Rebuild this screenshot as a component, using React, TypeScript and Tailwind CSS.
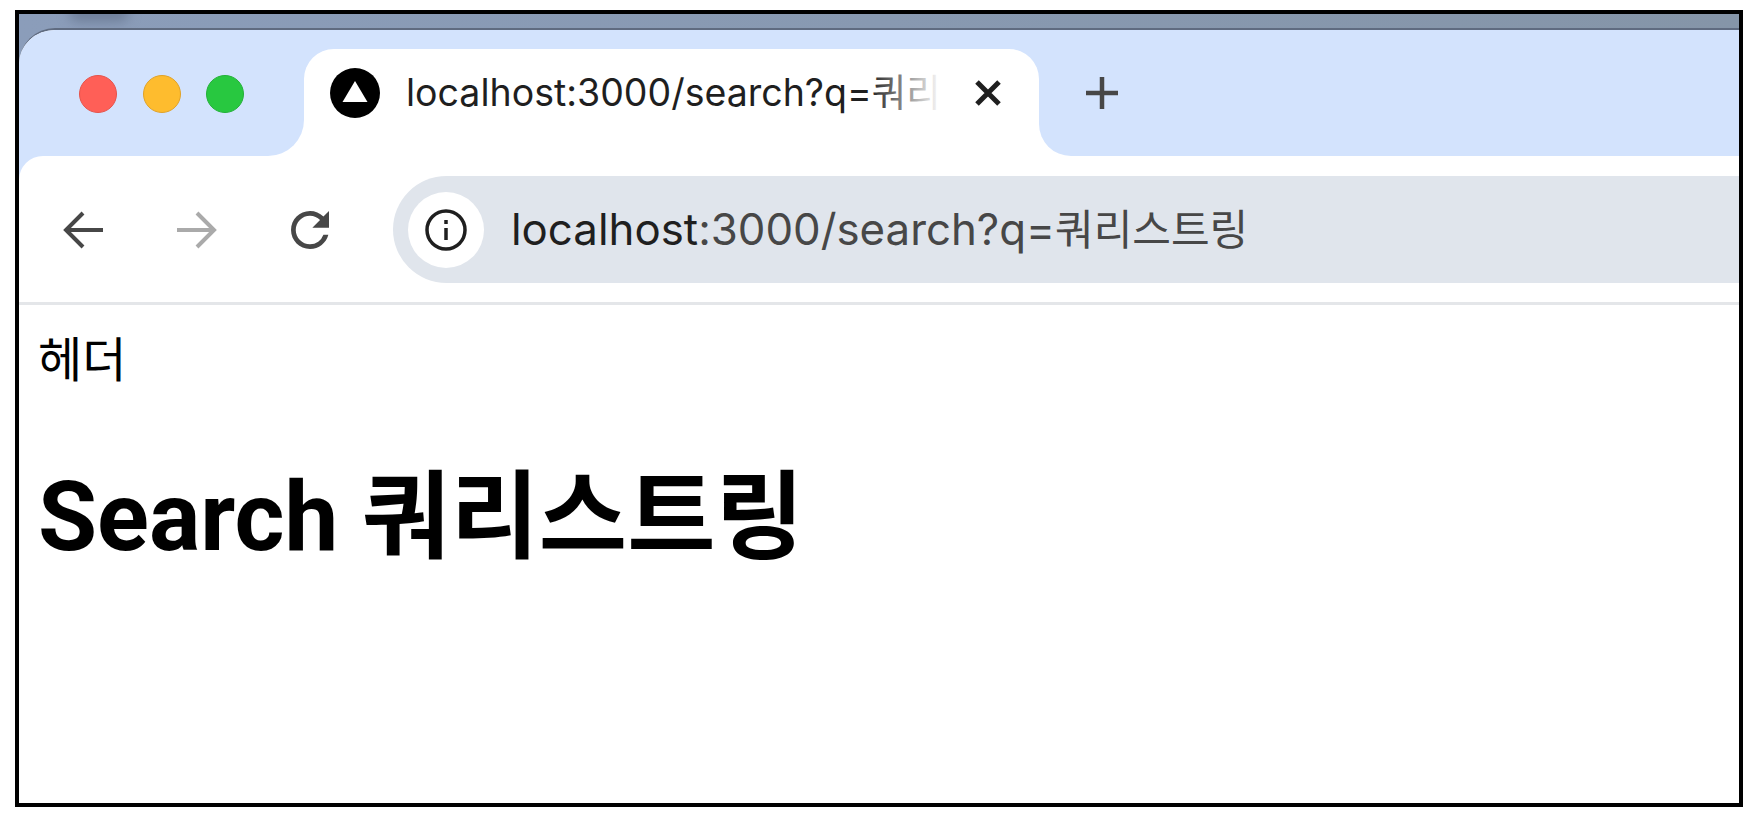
const sans = 'font-["Inter","Noto_Sans_CJK_KR",sans-serif]';

function Dot({ fill, edge }: { fill: string; edge: string }) {
  return <span className={`h-[38px] w-[38px] rounded-full border ${fill} ${edge}`} />;
}

function NavIcon({ children, color }: { children: React.ReactNode; color: string }) {
  return (
    <svg viewBox="0 0 40 40" className={`h-10 w-10 ${color}`} fill="none" stroke="currentColor" strokeWidth="4">
      {children}
    </svg>
  );
}

export default function App() {
  return (
    <div className="h-[820px] w-[1760px] overflow-hidden bg-white pl-[15px] pt-[10px]">
      <div className="flex h-[797px] w-[1728px] flex-col overflow-hidden border-4 border-black bg-white">
        <div className="relative shrink-0 overflow-hidden bg-linear-to-r from-[#8b9dba] to-[#8595a8] pt-[14px]">
          <div className="absolute left-[50px] top-[-10px] h-[18px] w-[60px] rounded-full bg-[#6f7f99] blur-[6px]" />
          <div className="relative flex h-[128px] overflow-hidden rounded-tl-[36px] border-t-2 border-[#5f6b80] bg-white">
            <div className="flex h-[126px] w-[285px] shrink-0 items-start gap-[25.5px] rounded-br-[36px] bg-[#d3e3fd] pl-[60px] pt-[45px]">
              <Dot fill="bg-[#ff5f57]" edge="border-[#e5534b]" />
              <Dot fill="bg-[#febc2e]" edge="border-[#e0a228]" />
              <Dot fill="bg-[#28c840]" edge="border-[#23b138]" />
            </div>
            <div className="h-[126px] w-[735px] shrink-0 bg-[#d3e3fd] pt-[19px]">
              <div className="flex h-[107px] items-start rounded-t-[30px] bg-white pl-[26px] pt-[19px]">
                <svg viewBox="0 0 50 50" className="h-[50px] w-[50px] shrink-0">
                  <circle cx="25" cy="25" r="25" fill="#000" />
                  <path d="M25 13 L37.5 34 H12.5 Z" fill="#fff" />
                </svg>
                <span className={`${sans} relative ml-[26px] mt-[3px] w-[535px] shrink-0 overflow-hidden text-[37.5px] leading-[44px] whitespace-nowrap text-[#1f1f1f]`}>
                  localhost:3000/search?q=쿼리
                  <span className="absolute inset-y-0 right-0 w-[72px] bg-linear-to-r from-white/0 to-white" />
                </span>
                <svg viewBox="0 0 30 30" className="ml-[32px] mt-[10px] h-[30px] w-[30px] shrink-0" stroke="#1f1f1f" strokeWidth="5">
                  <path d="M4 4 L26 26 M26 4 L4 26" />
                </svg>
              </div>
            </div>
            <div className="flex h-[126px] flex-1 items-start rounded-bl-[32px] bg-[#d3e3fd] pl-[46px] pt-[46px]">
              <svg viewBox="0 0 34 34" className="h-[34px] w-[34px]" stroke="#474747" strokeWidth="4.5">
                <path d="M17 1 V33 M1 17 H33" />
              </svg>
            </div>
          </div>
        </div>
        <div className="shrink-0 bg-[#d3e3fd]">
          <div className="flex h-[149px] items-start rounded-tl-[24px] border-b-[3px] border-[#e4e6e9] bg-white pt-[20px]">
            <div className="flex h-[107px] w-[374px] shrink-0 items-center gap-[74px] pl-[44px]">
              <NavIcon color="text-[#474747]">
                <path d="M40 20 H4 M20 3 L3 20 L20 37" />
              </NavIcon>
              <NavIcon color="text-[#aaaaaa]">
                <path d="M0 20 H36 M20 3 L37 20 L20 37" />
              </NavIcon>
              <svg viewBox="4 4 16 16" className="h-[38px] w-[38px]" fill="#474747">
                <path d="M17.65 6.35A7.958 7.958 0 0 0 12 4c-4.42 0-7.99 3.58-7.99 8s3.57 8 7.99 8c3.73 0 6.84-2.55 7.73-6h-2.08A5.99 5.99 0 0 1 12 18c-3.31 0-6-2.69-6-6s2.69-6 6-6c1.66 0 3.14.69 4.22 1.78L13 11h7V4l-2.35 2.35z" />
              </svg>
            </div>
            <div className="flex h-[107px] flex-1 items-center rounded-l-[54px] bg-[#e0e5ec] pl-[15px]">
              <div className="flex h-[76px] w-[76px] shrink-0 items-center justify-center rounded-full bg-white">
                <svg viewBox="0 0 42 42" className="h-[42px] w-[42px]" fill="none" stroke="#1f1f1f" strokeWidth="3.5">
                  <circle cx="21" cy="21" r="19" />
                  <path d="M21 19 V31 M21 11 V15" />
                </svg>
              </div>
              <span className={`${sans} ml-[27px] text-[43.8px] leading-none whitespace-nowrap text-[#474747]`}>
                <span className="text-[#1f1f1f]">localhost</span>:3000/search?q=<span className="text-[42px]">쿼리스트링</span>
              </span>
            </div>
          </div>
        </div>
        <div className={`pl-[19px] pt-[31px] font-["Roboto","Noto_Sans_CJK_KR",sans-serif] text-black`}>
          <div className="text-[48px] leading-[50px]">헤더</div>
          <h1 className="mt-[76px] text-[96px] leading-[110px] font-bold">Search 쿼리스트링</h1>
        </div>
      </div>
    </div>
  );
}
